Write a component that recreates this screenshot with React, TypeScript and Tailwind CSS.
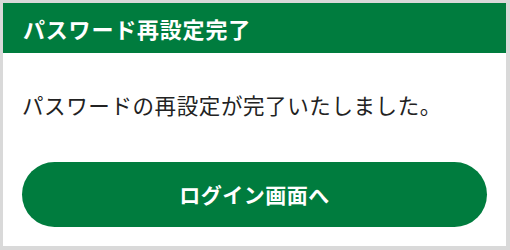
const App = () => {
  return (
    <div
      className="w-[510px] h-[250px] bg-[#d9d9d9] pt-[3px] pl-[3px] pr-[4px] pb-[4px]"
      style={{ fontFamily: '"Noto Sans CJK JP", "Noto Sans", sans-serif' }}
    >
      <div className="h-full bg-white flex flex-col">
        {/* Header */}
        <div className="h-[50px] bg-[#007c3e] flex items-center px-[20px]">
          <h1 className="text-white text-[22px] font-bold leading-none tracking-[0.8px]">
            パスワード再設定完了
          </h1>
        </div>

        {/* Body */}
        <div className="flex-1 flex flex-col px-[19px] pt-[35px]">
          <p className="text-[#222] text-[21.5px] leading-[33px] tracking-[0.6px]">
            パスワードの再設定が完了いたしました。
          </p>
          <button className="mt-[41px] h-[65px] w-full rounded-full bg-[#007c3e] text-white text-[21px] font-bold tracking-[0.5px] flex items-center justify-center">
            ログイン画面へ
          </button>
        </div>
      </div>
    </div>
  );
};

export default App;
